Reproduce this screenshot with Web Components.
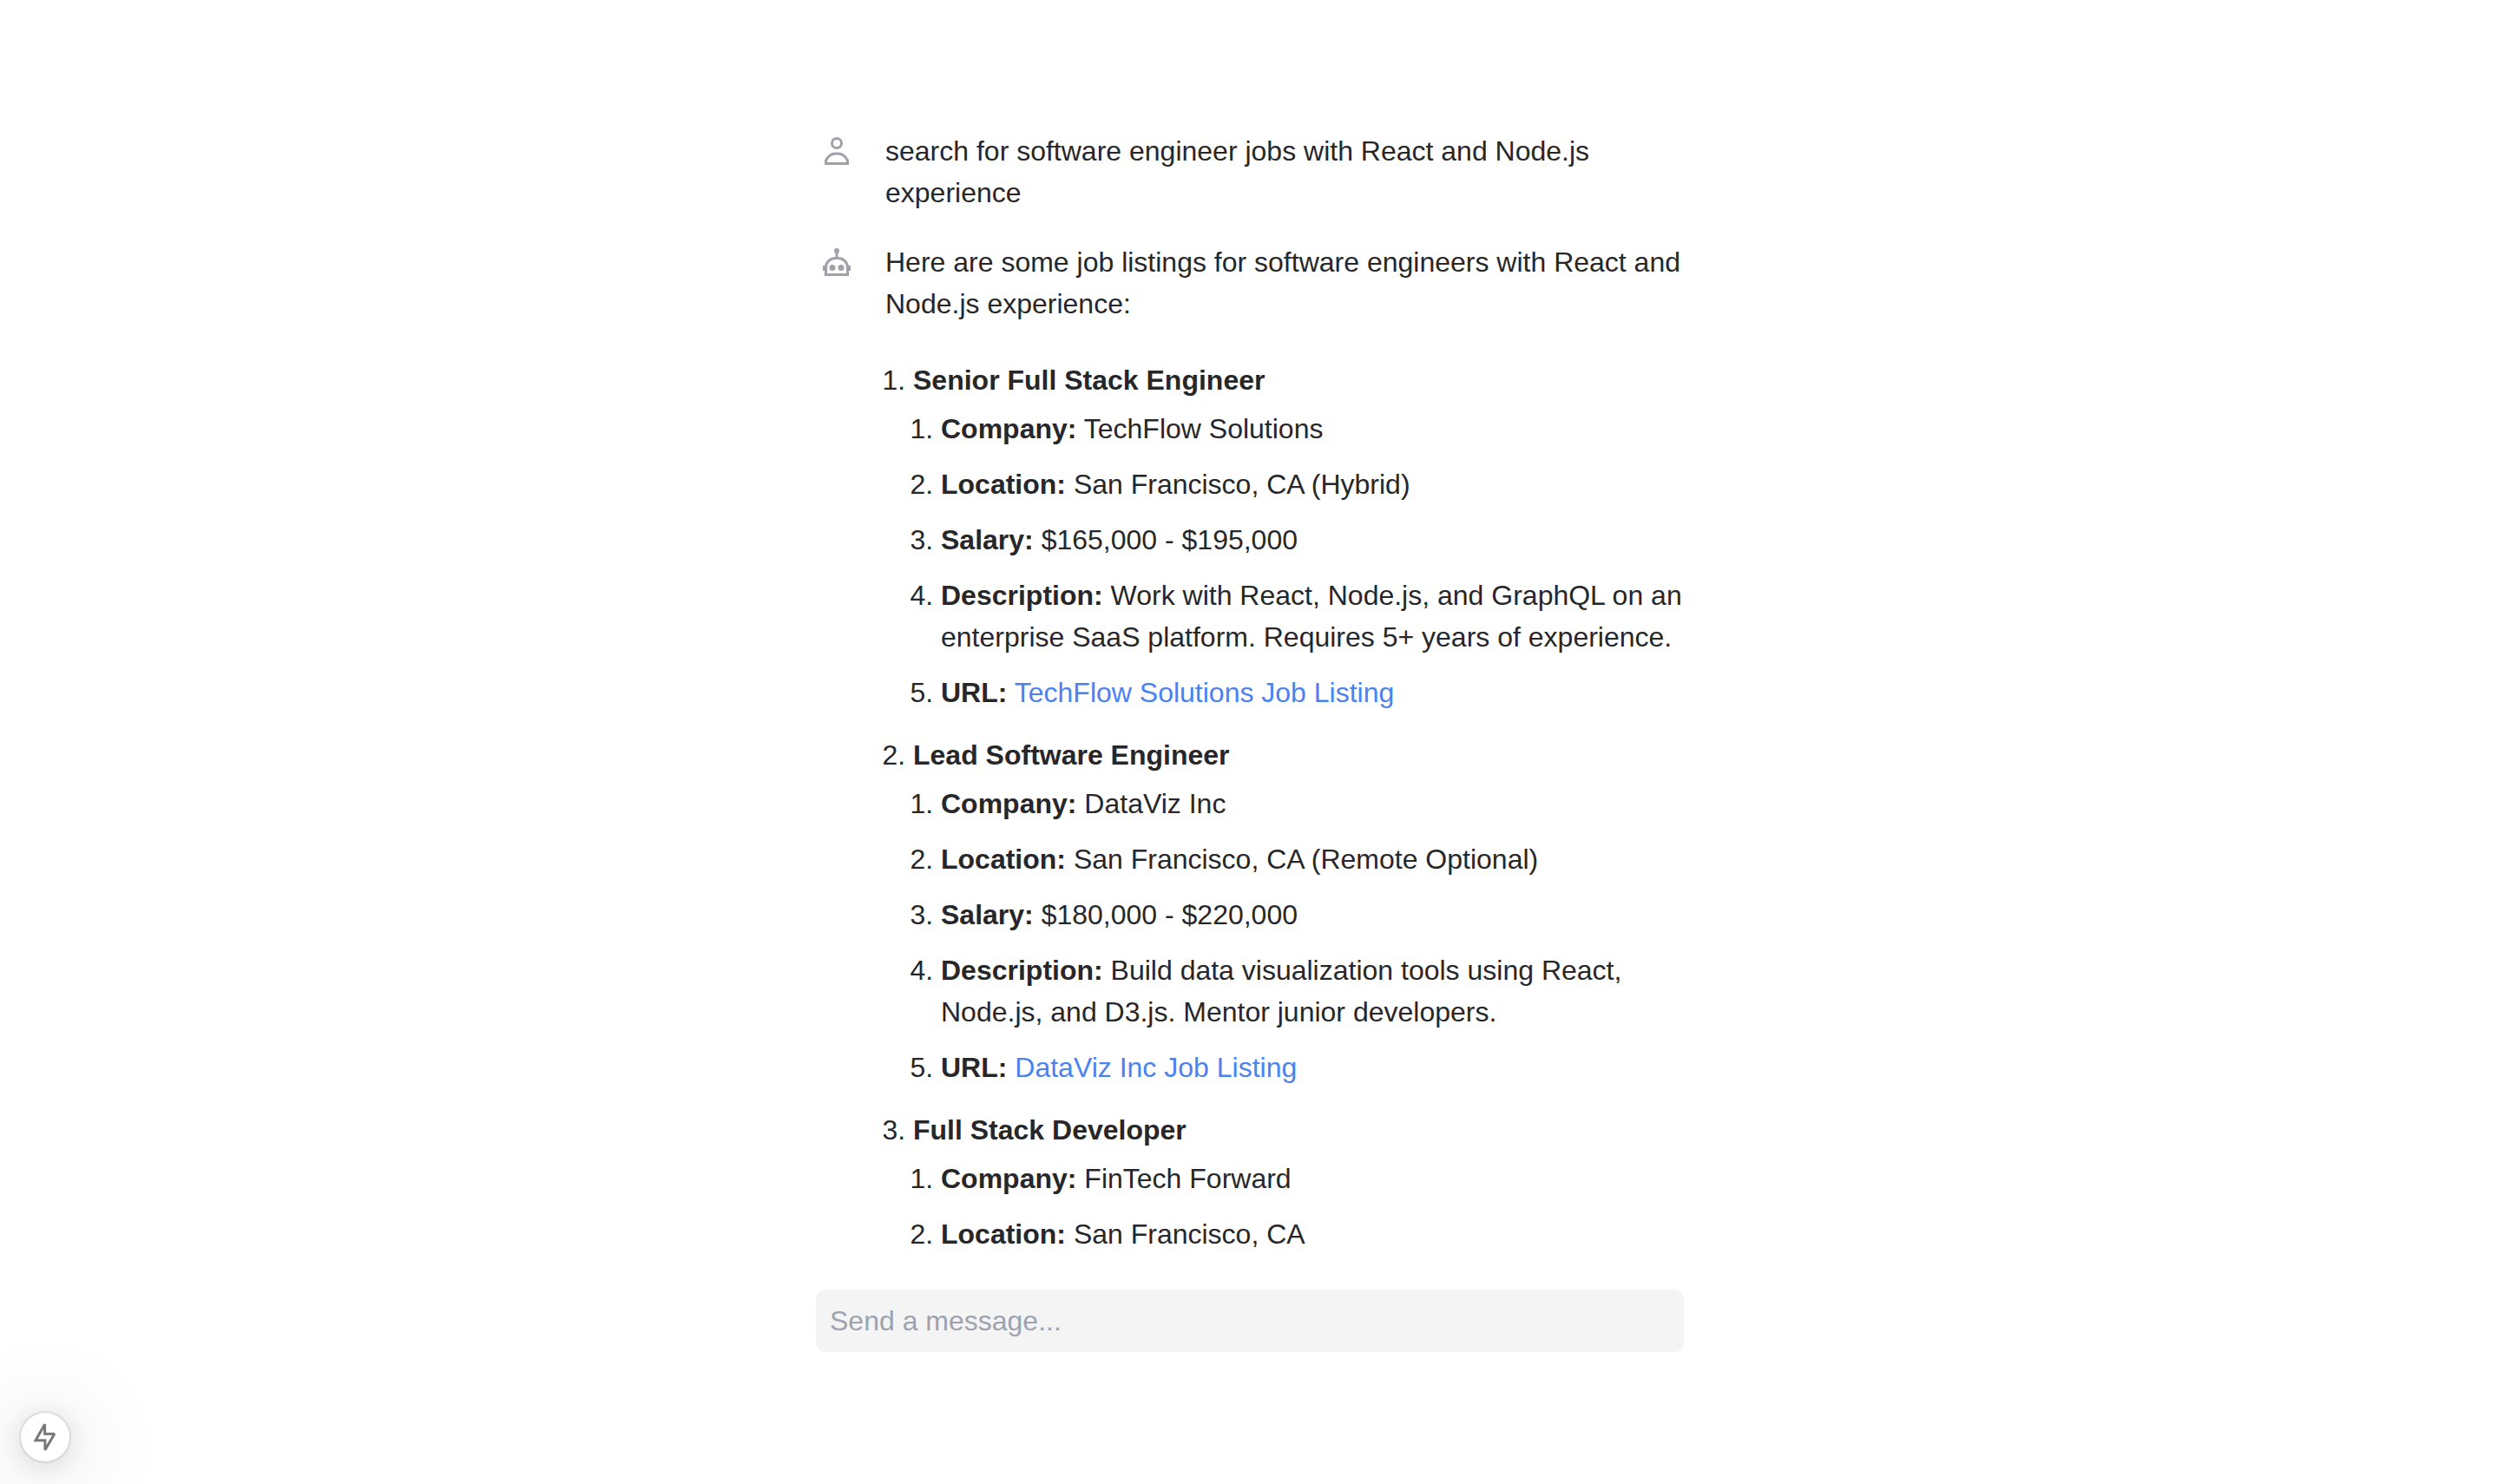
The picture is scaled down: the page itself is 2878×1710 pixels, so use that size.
<!DOCTYPE html>
<html lang="en">
<head>
<meta charset="utf-8">
<title>Job search chat</title>
<style>
  body { margin: 0; background: #fff; color: #27272a; font: 32px/48px "Liberation Sans", Arial, sans-serif; }
</style>
</head>
<body>
<chat-page>
  <chat-message icon="user">search for software engineer jobs with React and Node.js experience</chat-message>
  <chat-message icon="bot">Here are some job listings for software engineers with React and Node.js experience:
    <job-list></job-list>
  </chat-message>
  <message-form slot="footer"></message-form>
</chat-page>
<dev-indicator></dev-indicator>

<script>
const define = (name, html, setup) => customElements.define(name, class extends HTMLElement {
  connectedCallback() {
    if (this.shadowRoot) return;
    this.attachShadow({ mode: 'open' }).innerHTML = html;
    if (setup) setup(this);
  }
});

define('chat-page', `
<style>
  :host { display: flex; flex-direction: column; align-items: center; height: 100vh; box-sizing: border-box; padding: 150px 32px 152px 34px; gap: 32px; }
  main, footer { width: 100%; max-width: 1000px; }
  main { flex: 1; min-height: 0; overflow-y: auto; scrollbar-width: none; display: flex; flex-direction: column; gap: 32px; }
</style>
<main><slot></slot></main>
<footer><slot name="footer"></slot></footer>`);

const icons = {
  user: `<circle cx="8" cy="3.5" r="2.75"/><path d="M1.75 15.25V13.4C2.9 11.1 5 9.55 7.4 9.55H8.6C11 9.55 13.1 11.1 14.25 13.4V15.25Z"/>`,
  bot: `<path d="M8 2V5.5M1.75 15.25V11.2C1.75 8 4.2 5.75 7.25 5.75H8.75C11.8 5.75 14.25 8 14.25 11.2V15.25Z"/>
    <g fill="currentColor" stroke="none"><circle cx="8" cy="1.5" r="1.5"/><circle cx="5.5" cy="11.25" r="1.75"/><circle cx="10.5" cy="11.25" r="1.75"/><path d="M0 10H1.5V13H0ZM14.5 10H16V13H14.5Z"/></g>`
};

define('chat-message', `
<style>
  :host { display: flex; gap: 32px; flex-shrink: 0; }
  .icon { flex: 0 0 48px; height: 48px; display: flex; align-items: center; justify-content: center; color: #a1a1aa; }
  svg { width: 32px; height: 32px; }
  .body { flex: 1; min-width: 0; }
</style>
<div class="icon"><svg viewBox="0 0 16 16" fill="none" stroke="currentColor" stroke-width="1.5" aria-hidden="true"></svg></div>
<div class="body"><slot></slot></div>`,
  el => { el.shadowRoot.querySelector('svg').innerHTML = icons[el.getAttribute('icon')]; });

const jobs = [
  ['Senior Full Stack Engineer', [
    ['Company', 'TechFlow Solutions'],
    ['Location', 'San Francisco, CA (Hybrid)'],
    ['Salary', '$165,000 - $195,000'],
    ['Description', 'Work with React, Node.js, and GraphQL on an enterprise SaaS platform. Requires 5+ years of experience.'],
    ['URL', '<a href="#techflow">TechFlow Solutions Job Listing</a>']]],
  ['Lead Software Engineer', [
    ['Company', 'DataViz Inc'],
    ['Location', 'San Francisco, CA (Remote Optional)'],
    ['Salary', '$180,000 - $220,000'],
    ['Description', 'Build data visualization tools using React, Node.js, and D3.js. Mentor junior developers.'],
    ['URL', '<a href="#dataviz">DataViz Inc Job Listing</a>']]],
  ['Full Stack Developer', [
    ['Company', 'FinTech Forward'],
    ['Location', 'San Francisco, CA']]]
];

define('job-list', `
<style>
  :host { display: block; padding-top: 32px; }
  ol { list-style: decimal outside; margin: 0 0 0 32px; padding: 0; }
  li { padding: 8px 0; }
  strong { font-weight: 700; }
  a { color: #4b82ee; text-decoration: none; }
</style>
<ol>${jobs.map(([title, rows]) => `<li><strong>${title}</strong><ol>${
  rows.map(([k, v]) => `<li><strong>${k}:</strong> ${v}</li>`).join('')}</ol></li>`).join('')}</ol>`);

define('message-form', `
<style>
  :host { display: block; }
  form { margin: 0; }
  input { display: block; width: 100%; height: 72px; box-sizing: border-box; border: 0; border-radius: 12px; outline: 0; padding: 0 16px; background: #f4f4f4; color: inherit; font: inherit; }
  input::placeholder { color: #9ca3af; opacity: 1; }
</style>
<form><input type="text" placeholder="Send a message..." aria-label="Send a message"></form>`);

define('dev-indicator', `
<style>
  :host { position: fixed; left: 24px; bottom: 26px; }
  button { display: flex; align-items: center; justify-content: center; width: 56px; height: 56px; padding: 0; border: 0; border-radius: 50%; background: #fff; color: #777;
    box-shadow: 0 0 0 2px rgba(0,0,0,.08), 0 4px 32px rgba(0,0,0,.14), 0 12px 104px rgba(0,0,0,.26); }
  svg { width: 26px; height: 32px; }
</style>
<button type="button" aria-label="Static route"><svg viewBox="0 0 26 32" fill="none" stroke="currentColor" stroke-width="3" stroke-miterlimit="2"><path d="M12.6 1.3L2 19.7H12.9V30.7L23.8 12.3H12.6Z"/></svg></button>`);
</script>
</body>
</html>
